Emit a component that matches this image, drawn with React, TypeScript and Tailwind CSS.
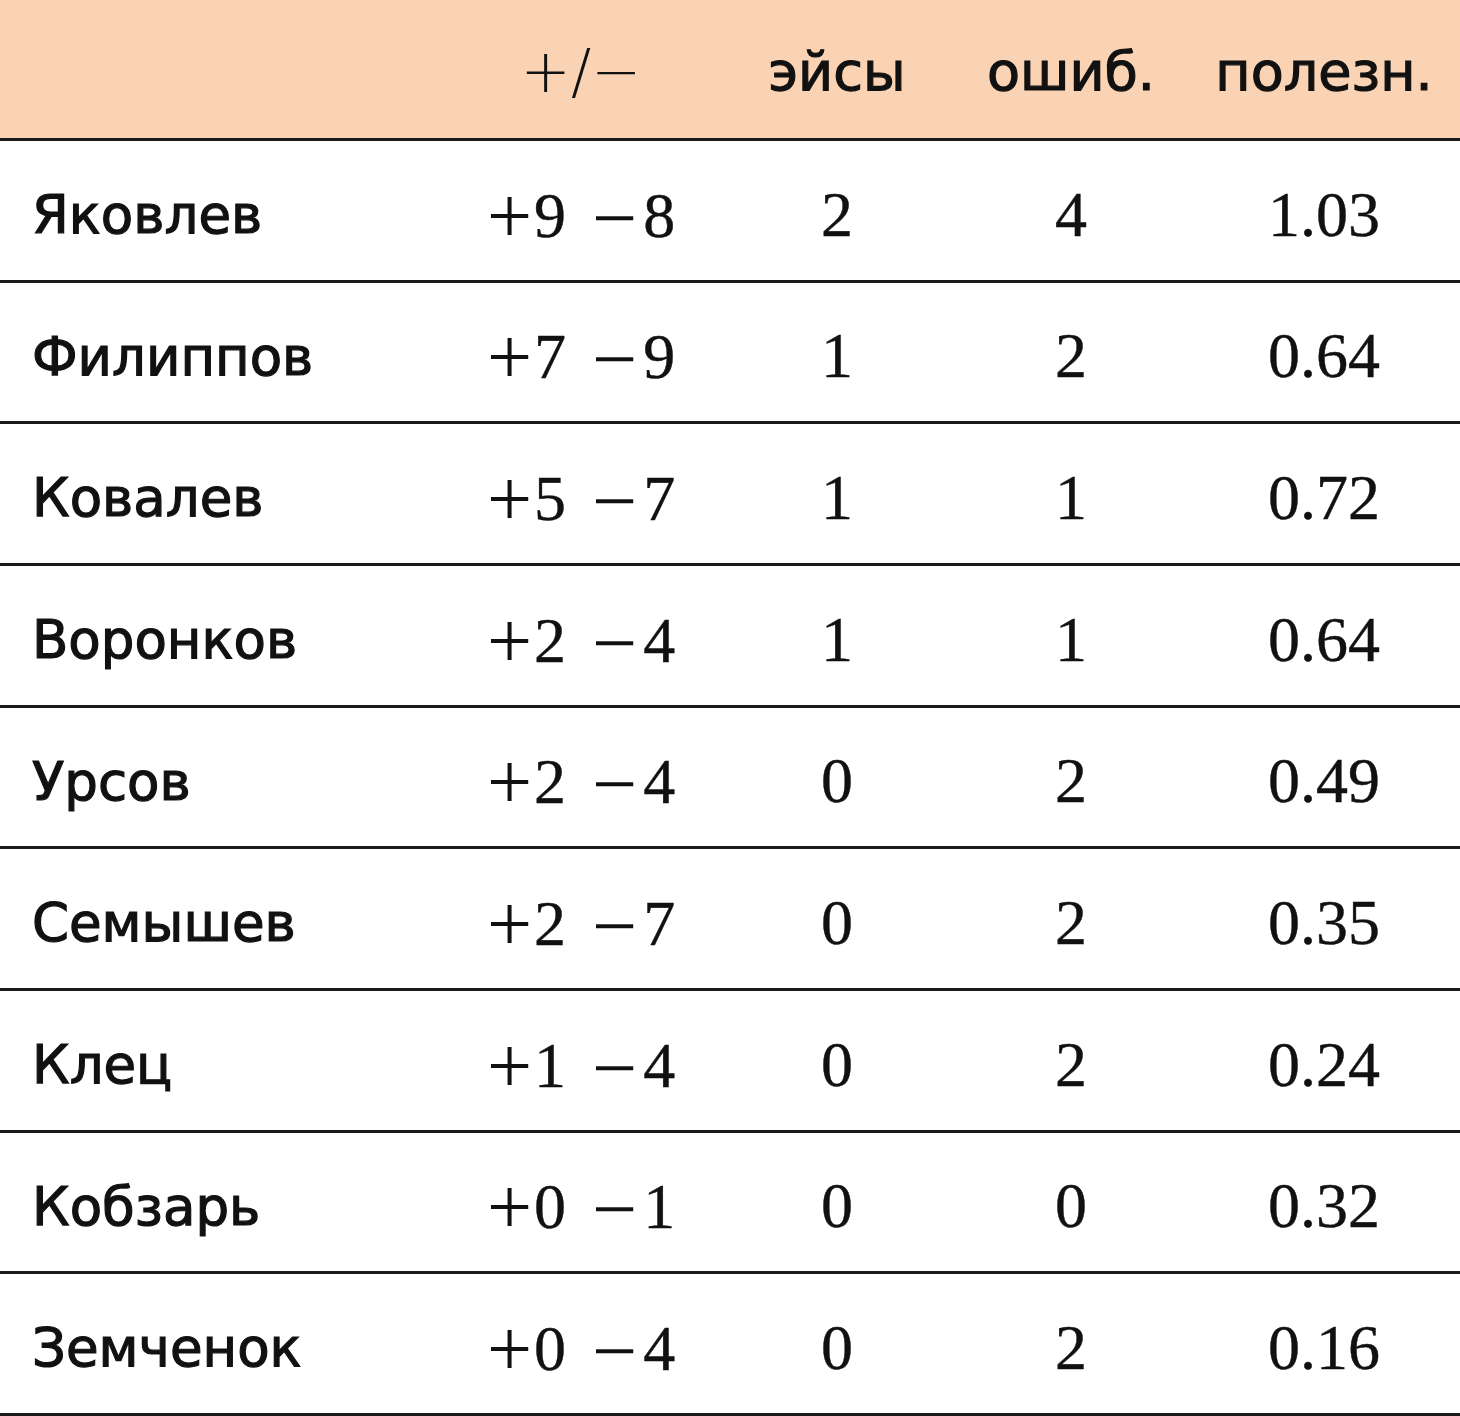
import React from "react";

const rows: [string, string, string, string, string, string][] = [
  ["Яковлев", "9", "8", "2", "4", "1.03"],
  ["Филиппов", "7", "9", "1", "2", "0.64"],
  ["Ковалев", "5", "7", "1", "1", "0.72"],
  ["Воронков", "2", "4", "1", "1", "0.64"],
  ["Урсов", "2", "4", "0", "2", "0.49"],
  ["Семышев", "2", "7", "0", "2", "0.35"],
  ["Клец", "1", "4", "0", "2", "0.24"],
  ["Кобзарь", "0", "1", "0", "0", "0.32"],
  ["Земченок", "0", "4", "0", "2", "0.16"],
];

const sans = "font-['DejaVu_Sans',sans-serif] [-webkit-text-stroke:1.2px_#111]";
const serif = "font-['Liberation_Serif',serif] [-webkit-text-stroke:0.4px_#111]";

export default function App() {
  return (
    <div className="w-[1460px] h-[1416px] bg-white text-[#111] overflow-hidden">
      <div className="grid grid-cols-[442px_278px_234px_234px_272px] h-[141px] bg-[#f9d3b3] border-b-[3px] border-[#1a1a1a]">
        <div />
        <div className="flex items-center justify-center pt-[4px] text-[60px] font-extralight font-['DejaVu_Sans',sans-serif]">+/−</div>
        <div className={`flex items-center justify-center pt-[4px] text-[54px] ${sans}`}>эйсы</div>
        <div className={`flex items-center justify-center pt-[4px] text-[54px] ${sans}`}>ошиб.</div>
        <div className={`flex items-center justify-center pt-[4px] text-[54px] ${sans}`}>полезн.</div>
      </div>
      {rows.map((r) => (
        <div
          key={r[0]}
          className="grid grid-cols-[442px_278px_234px_234px_272px] h-[141.67px] border-b-[3px] border-[#1a1a1a]"
        >
          <div className={`flex items-center pl-[32px] pt-[9px] text-[53px] ${sans}`}>{r[0]}</div>
          <div className={`flex items-center justify-center pt-[9px] text-[64px] ${serif}`}>
            <div className="flex items-baseline leading-none">
              <span className="text-[80px] leading-[0.7] translate-y-[6px] [-webkit-text-stroke:0px]">+</span>
              <span className="ml-[2px]">{r[1]}</span>
              <span className="ml-[26px] text-[80px] leading-[0.7] translate-y-[8px] [-webkit-text-stroke:0px]">−</span>
              <span className="ml-[6px]">{r[2]}</span>
            </div>
          </div>
          <div className={`flex items-center justify-center pt-[9px] text-[64px] ${serif}`}>{r[3]}</div>
          <div className={`flex items-center justify-center pt-[9px] text-[64px] ${serif}`}>{r[4]}</div>
          <div className={`flex items-center justify-center pt-[9px] text-[64px] ${serif}`}>{r[5]}</div>
        </div>
      ))}
    </div>
  );
}
